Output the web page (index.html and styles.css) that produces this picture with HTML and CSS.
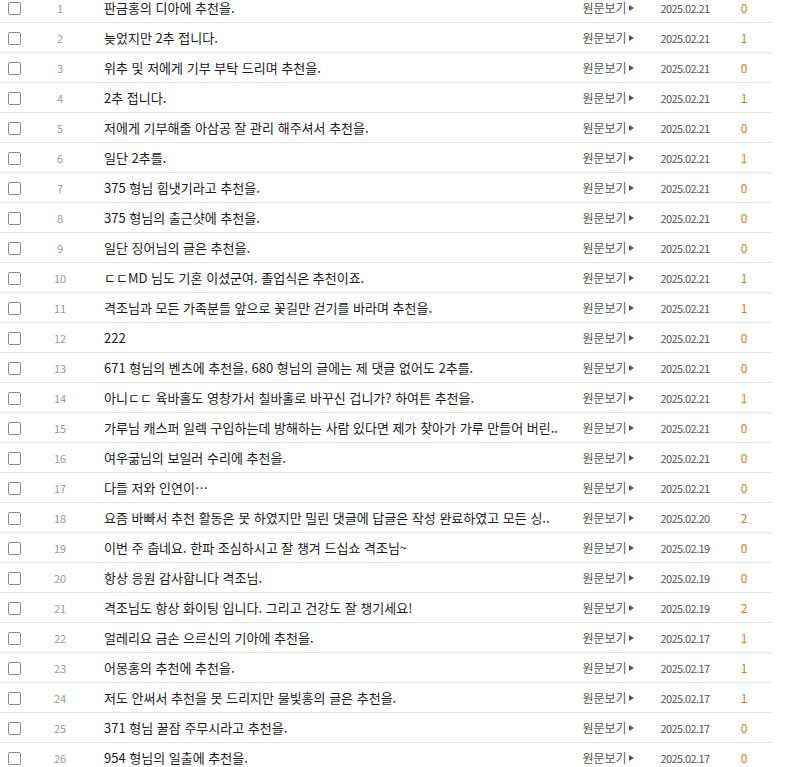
FILE: index.html
```html
<!DOCTYPE html>
<html lang="ko">
<head>
<meta charset="utf-8">
<title>추천 목록</title>
<link rel="stylesheet" href="styles.css">
</head>
<body>
<div class="list">
  <div class="row"><span class="chk"></span><span class="num">1</span><span class="title">판금홍의 디아에 추천을.</span><span class="orig">원문보기<svg class="tri" width="5" height="6" viewBox="0 0 5 6"><path d="M0 0L5 3L0 6Z"/></svg></span><span class="date">2025.02.21</span><span class="cnt">0</span></div>
  <div class="row"><span class="chk"></span><span class="num">2</span><span class="title">늦었지만 2추 접니다.</span><span class="orig">원문보기<svg class="tri" width="5" height="6" viewBox="0 0 5 6"><path d="M0 0L5 3L0 6Z"/></svg></span><span class="date">2025.02.21</span><span class="cnt">1</span></div>
  <div class="row"><span class="chk"></span><span class="num">3</span><span class="title">위추 및 저에게 기부 부탁 드리며 추천을.</span><span class="orig">원문보기<svg class="tri" width="5" height="6" viewBox="0 0 5 6"><path d="M0 0L5 3L0 6Z"/></svg></span><span class="date">2025.02.21</span><span class="cnt">0</span></div>
  <div class="row"><span class="chk"></span><span class="num">4</span><span class="title">2추 접니다.</span><span class="orig">원문보기<svg class="tri" width="5" height="6" viewBox="0 0 5 6"><path d="M0 0L5 3L0 6Z"/></svg></span><span class="date">2025.02.21</span><span class="cnt">1</span></div>
  <div class="row"><span class="chk"></span><span class="num">5</span><span class="title">저에게 기부해줄 아삼공 잘 관리 해주셔서 추천을.</span><span class="orig">원문보기<svg class="tri" width="5" height="6" viewBox="0 0 5 6"><path d="M0 0L5 3L0 6Z"/></svg></span><span class="date">2025.02.21</span><span class="cnt">0</span></div>
  <div class="row"><span class="chk"></span><span class="num">6</span><span class="title">일단 2추를.</span><span class="orig">원문보기<svg class="tri" width="5" height="6" viewBox="0 0 5 6"><path d="M0 0L5 3L0 6Z"/></svg></span><span class="date">2025.02.21</span><span class="cnt">1</span></div>
  <div class="row"><span class="chk"></span><span class="num">7</span><span class="title">375 형님 힘냇기라고 추천을.</span><span class="orig">원문보기<svg class="tri" width="5" height="6" viewBox="0 0 5 6"><path d="M0 0L5 3L0 6Z"/></svg></span><span class="date">2025.02.21</span><span class="cnt">0</span></div>
  <div class="row"><span class="chk"></span><span class="num">8</span><span class="title">375 형님의 출근샷에 추천을.</span><span class="orig">원문보기<svg class="tri" width="5" height="6" viewBox="0 0 5 6"><path d="M0 0L5 3L0 6Z"/></svg></span><span class="date">2025.02.21</span><span class="cnt">0</span></div>
  <div class="row"><span class="chk"></span><span class="num">9</span><span class="title">일단 징어님의 글은 추천을.</span><span class="orig">원문보기<svg class="tri" width="5" height="6" viewBox="0 0 5 6"><path d="M0 0L5 3L0 6Z"/></svg></span><span class="date">2025.02.21</span><span class="cnt">0</span></div>
  <div class="row"><span class="chk"></span><span class="num">10</span><span class="title">ㄷㄷMD 님도 기혼 이셨군여. 졸업식은 추천이죠.</span><span class="orig">원문보기<svg class="tri" width="5" height="6" viewBox="0 0 5 6"><path d="M0 0L5 3L0 6Z"/></svg></span><span class="date">2025.02.21</span><span class="cnt">1</span></div>
  <div class="row"><span class="chk"></span><span class="num">11</span><span class="title">격조님과 모든 가족분들 앞으로 꽃길만 걷기를 바라며 추천을.</span><span class="orig">원문보기<svg class="tri" width="5" height="6" viewBox="0 0 5 6"><path d="M0 0L5 3L0 6Z"/></svg></span><span class="date">2025.02.21</span><span class="cnt">1</span></div>
  <div class="row"><span class="chk"></span><span class="num">12</span><span class="title">222</span><span class="orig">원문보기<svg class="tri" width="5" height="6" viewBox="0 0 5 6"><path d="M0 0L5 3L0 6Z"/></svg></span><span class="date">2025.02.21</span><span class="cnt">0</span></div>
  <div class="row"><span class="chk"></span><span class="num">13</span><span class="title">671 형님의 벤츠에 추천을. 680 형님의 글에는 제 댓글 없어도 2추를.</span><span class="orig">원문보기<svg class="tri" width="5" height="6" viewBox="0 0 5 6"><path d="M0 0L5 3L0 6Z"/></svg></span><span class="date">2025.02.21</span><span class="cnt">0</span></div>
  <div class="row"><span class="chk"></span><span class="num">14</span><span class="title">아니ㄷㄷ 육바홀도 영창가서 칠바홀로 바꾸신 겁니가? 하여튼 추천을.</span><span class="orig">원문보기<svg class="tri" width="5" height="6" viewBox="0 0 5 6"><path d="M0 0L5 3L0 6Z"/></svg></span><span class="date">2025.02.21</span><span class="cnt">1</span></div>
  <div class="row"><span class="chk"></span><span class="num">15</span><span class="title">가루님 캐스퍼 일렉 구입하는데 방해하는 사람 있다면 제가 찾아가 가루 만들어 버린..</span><span class="orig">원문보기<svg class="tri" width="5" height="6" viewBox="0 0 5 6"><path d="M0 0L5 3L0 6Z"/></svg></span><span class="date">2025.02.21</span><span class="cnt">0</span></div>
  <div class="row"><span class="chk"></span><span class="num">16</span><span class="title">여우굶님의 보일러 수리에 추천을.</span><span class="orig">원문보기<svg class="tri" width="5" height="6" viewBox="0 0 5 6"><path d="M0 0L5 3L0 6Z"/></svg></span><span class="date">2025.02.21</span><span class="cnt">0</span></div>
  <div class="row"><span class="chk"></span><span class="num">17</span><span class="title">다들 저와 인연이…</span><span class="orig">원문보기<svg class="tri" width="5" height="6" viewBox="0 0 5 6"><path d="M0 0L5 3L0 6Z"/></svg></span><span class="date">2025.02.21</span><span class="cnt">0</span></div>
  <div class="row"><span class="chk"></span><span class="num">18</span><span class="title">요즘 바빠서 추천 활동은 못 하였지만 밀린 댓글에 답글은 작성 완료하였고 모든 싱..</span><span class="orig">원문보기<svg class="tri" width="5" height="6" viewBox="0 0 5 6"><path d="M0 0L5 3L0 6Z"/></svg></span><span class="date">2025.02.20</span><span class="cnt">2</span></div>
  <div class="row"><span class="chk"></span><span class="num">19</span><span class="title">이번 주 춥네요. 한파 조심하시고 잘 챙겨 드십쇼 격조님~</span><span class="orig">원문보기<svg class="tri" width="5" height="6" viewBox="0 0 5 6"><path d="M0 0L5 3L0 6Z"/></svg></span><span class="date">2025.02.19</span><span class="cnt">0</span></div>
  <div class="row"><span class="chk"></span><span class="num">20</span><span class="title">항상 응원 감사합니다 격조님.</span><span class="orig">원문보기<svg class="tri" width="5" height="6" viewBox="0 0 5 6"><path d="M0 0L5 3L0 6Z"/></svg></span><span class="date">2025.02.19</span><span class="cnt">0</span></div>
  <div class="row"><span class="chk"></span><span class="num">21</span><span class="title">격조님도 항상 화이팅 입니다. 그리고 건강도 잘 챙기세요!</span><span class="orig">원문보기<svg class="tri" width="5" height="6" viewBox="0 0 5 6"><path d="M0 0L5 3L0 6Z"/></svg></span><span class="date">2025.02.19</span><span class="cnt">2</span></div>
  <div class="row"><span class="chk"></span><span class="num">22</span><span class="title">얼레리요 금손 으르신의 기아에 추천을.</span><span class="orig">원문보기<svg class="tri" width="5" height="6" viewBox="0 0 5 6"><path d="M0 0L5 3L0 6Z"/></svg></span><span class="date">2025.02.17</span><span class="cnt">1</span></div>
  <div class="row"><span class="chk"></span><span class="num">23</span><span class="title">어몽홍의 추천에 추천을.</span><span class="orig">원문보기<svg class="tri" width="5" height="6" viewBox="0 0 5 6"><path d="M0 0L5 3L0 6Z"/></svg></span><span class="date">2025.02.17</span><span class="cnt">1</span></div>
  <div class="row"><span class="chk"></span><span class="num">24</span><span class="title">저도 안써서 추천을 못 드리지만 물빛홍의 글은 추천을.</span><span class="orig">원문보기<svg class="tri" width="5" height="6" viewBox="0 0 5 6"><path d="M0 0L5 3L0 6Z"/></svg></span><span class="date">2025.02.17</span><span class="cnt">1</span></div>
  <div class="row"><span class="chk"></span><span class="num">25</span><span class="title">371 형님 꿀잠 주무시라고 추천을.</span><span class="orig">원문보기<svg class="tri" width="5" height="6" viewBox="0 0 5 6"><path d="M0 0L5 3L0 6Z"/></svg></span><span class="date">2025.02.17</span><span class="cnt">0</span></div>
  <div class="row"><span class="chk"></span><span class="num">26</span><span class="title">954 형님의 일출에 추천을.</span><span class="orig">원문보기<svg class="tri" width="5" height="6" viewBox="0 0 5 6"><path d="M0 0L5 3L0 6Z"/></svg></span><span class="date">2025.02.17</span><span class="cnt">0</span></div>
</div>
</body>
</html>
```
FILE: styles.css
```css
html, body {
  margin: 0;
  padding: 0;
  background: #fff;
}
body {
  font-family: "Noto Sans CJK KR", "Noto Sans", sans-serif;
  font-size: 12px;
  color: #333;
  overflow: hidden;
}
.list {
  width: 772px;
  margin-top: -7px;
}
.row {
  display: grid;
  grid-template-columns: 36px 48px 490px 68px 86px 32px 12px;
  align-items: center;
  height: 29px;
  line-height: 16px;
  border-bottom: 1px solid #e3e3e3;
}
.chk {
  margin-left: 8px;
  width: 11px;
  height: 11px;
  border: 1px solid #8a8a8a;
  border-radius: 2px;
  background: #fff;
  margin-top: 2px;
}
.num {
  text-align: center;
  color: #999;
  font-size: 11px;
}
.title {
  padding-left: 20px;
  color: #1a1a1a;
  font-size: 13px;
  white-space: nowrap;
}
.orig {
  color: #555;
  display: flex;
  align-items: center;
  justify-content: center;
  white-space: nowrap;
}
.tri {
  margin-left: 2px;
  fill: #555;
}
.date {
  text-align: center;
  color: #555;
  font-size: 11px;
  letter-spacing: -0.6px;
}
.cnt {
  text-align: center;
  color: #e07b20;
  font-size: 12px;
}
```
